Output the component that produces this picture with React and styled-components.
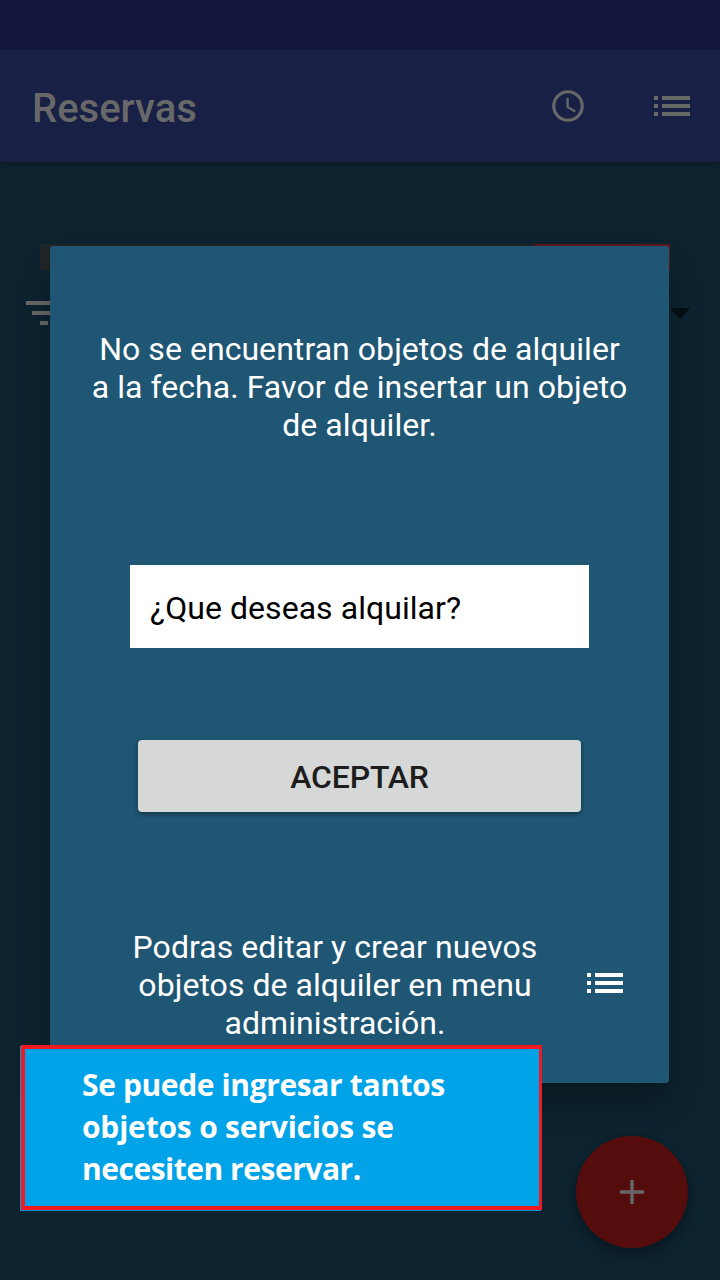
import React from "react";
import styled, { createGlobalStyle } from "styled-components";

const GlobalStyle = createGlobalStyle`
  * { box-sizing: border-box; }
  body { margin: 0; background: #0d232f; font-family: Roboto, sans-serif; }
  h1, p { margin: 0; }
`;

const Screen = styled.div`
  position: relative;
  width: 720px;
  height: 1280px;
  overflow: hidden;
  background: #0d232f;
`;

const StatusBar = styled.div`
  height: 50px;
  background: #13173f;
`;

const AppBar = styled.header`
  display: flex;
  align-items: center;
  height: 112px;
  padding: 0 30px 0 32px;
  background: #192046;
  box-shadow: 0 2px 7px rgba(0, 0, 0, 0.3);
`;

const Title = styled.h1`
  flex: 1;
  padding-top: 6px;
  font-size: 40px;
  line-height: 48px;
  font-weight: 500;
  color: #686868;
`;

const Actions = styled.div`
  display: flex;
  align-items: center;
  gap: 67px;
`;

const Icon = styled.svg`
  display: block;
  flex: none;
  fill: ${(p) => p.$color || "#686868"};
`;

const TableHead = styled.div`
  display: flex;
  height: 26px;
  margin: 82px 50px 0 40px;
`;

const HeadCell = styled.div`
  flex: ${(p) => (p.$width ? `0 0 ${p.$width}px` : 1)};
  background: ${(p) => p.$bg};
`;

const FilterRow = styled.div`
  display: flex;
  justify-content: space-between;
  padding: 31px 30px 0 26px;
`;

const Caret = styled.svg`
  display: block;
  margin-top: 7px;
  fill: #060f14;
`;

const Fab = styled.button`
  position: absolute;
  right: 32px;
  bottom: 32px;
  display: flex;
  align-items: center;
  justify-content: center;
  width: 112px;
  height: 112px;
  padding: 0;
  border: 0;
  border-radius: 50%;
  background: #550c0d;
  box-shadow: 0 8px 14px rgba(0, 0, 0, 0.26), 0 0 5px rgba(0, 0, 0, 0.15);
`;

const Dialog = styled.section`
  position: absolute;
  left: 50px;
  top: 246px;
  display: flex;
  flex-direction: column;
  align-items: center;
  width: 619px;
  height: 837px;
  padding-top: 84px;
  border-radius: 3px;
  background: #1e5673;
  box-shadow: 0 20px 32px -4px rgba(0, 0, 0, 0.34);
`;

const Message = styled.p`
  width: ${(p) => p.$width}px;
  font-size: 32px;
  line-height: 38px;
  letter-spacing: 0.05px;
  text-align: center;
  color: #fff;
`;

const Field = styled.div`
  display: flex;
  align-items: center;
  width: 459px;
  height: 83px;
  margin-top: 121px;
  padding: 3px 20px 0;
  background: #fff;
  font-size: 32px;
  line-height: 38px;
  letter-spacing: 0.05px;
  color: #000;
`;

const AcceptButton = styled.button`
  width: 443px;
  height: 72px;
  margin-top: 92px;
  padding: 2px 0 0;
  border: 0;
  border-radius: 4px;
  background: #d6d7d7;
  box-shadow: 0 2px 4px rgba(0, 0, 0, 0.4);
  font: 500 32px/38px Roboto, sans-serif;
  letter-spacing: -0.2px;
  color: #1d1d1d;
`;

const Hint = styled.div`
  display: flex;
  align-items: flex-start;
  align-self: stretch;
  margin-top: 116px;
  padding: 0 46px 0 70px;
  justify-content: space-between;
`;

const HintIcon = styled.div`
  padding-top: 45px;
`;

const Callout = styled.aside`
  position: absolute;
  left: 21px;
  top: 1045px;
  width: 521px;
  height: 165px;
  padding: 15px 0 0 57px;
  border: 4px solid #f11a20;
  border-right-width: 3px;
  background: #00a2e8;
  box-shadow: -1px 1px 0 #1292d6;
  font: 700 30px/42px "Open Sans", sans-serif;
  color: #fff;
`;

const Line = styled.span`
  display: block;
  white-space: nowrap;
  letter-spacing: ${(p) => (p.$tracking ? `${p.$tracking}px` : "inherit")};
`;

function ListIcon({ color }) {
  return (
    <Icon $color={color} width="36" height="20" viewBox="0 0 36 20">
      <path d="M0 0h4v4H0zM8 0h28v4H8zM0 8h4v4H0zM8 8h28v4H8zM0 16h4v4H0zM8 16h28v4H8z" />
    </Icon>
  );
}

export default function App() {
  return (
    <Screen>
      <GlobalStyle />
      <StatusBar />
      <AppBar>
        <Title>Reservas</Title>
        <Actions>
          <Icon width="38" height="38" viewBox="0 0 24 24">
            <path d="M11.99 2C6.47 2 2 6.48 2 12s4.47 10 9.99 10C17.52 22 22 17.52 22 12S17.52 2 11.99 2zM12 20c-4.42 0-8-3.58-8-8s3.58-8 8-8 8 3.58 8 8-3.58 8-8 8z" />
            <path d="M12.5 7H11v6l5.25 3.15.75-1.23-4.5-2.67z" />
          </Icon>
          <ListIcon />
        </Actions>
      </AppBar>
      <TableHead>
        <HeadCell $bg="#1f2527" />
        <HeadCell $width={136} $bg="#5e1818" />
      </TableHead>
      <FilterRow>
        <Icon width="36" height="24" viewBox="0 0 36 24">
          <path d="M0 0h36v4H0zM6 10h24v4H6zM14 20h8v4h-8z" />
        </Icon>
        <Caret width="20" height="11" viewBox="0 0 20 11">
          <path d="M0 0h20L10 11z" />
        </Caret>
      </FilterRow>
      <Fab aria-label="Agregar">
        <Icon width="24" height="24" viewBox="0 0 24 24">
          <path d="M10.3 0h3.4v10.3H24v3.4H13.7V24h-3.4V13.7H0v-3.4h10.3z" />
        </Icon>
      </Fab>
      <Dialog>
        <Message $width={560}>
          <Line>No se encuentran objetos de alquiler</Line>
          <Line>a la fecha. Favor de insertar un objeto</Line>
          <Line>de alquiler.</Line>
        </Message>
        <Field>¿Que deseas alquilar?</Field>
        <AcceptButton>ACEPTAR</AcceptButton>
        <Hint>
          <Message $width={430}>
            <Line>Podras editar y crear nuevos</Line>
            <Line>objetos de alquiler en menu</Line>
            <Line>administración.</Line>
          </Message>
          <HintIcon>
            <ListIcon color="#fff" />
          </HintIcon>
        </Hint>
      </Dialog>
      <Callout>
        <Line $tracking={-0.38}>Se puede ingresar tantos</Line>
        <Line $tracking={-0.2}>objetos o servicios se</Line>
        <Line $tracking={-0.48}>necesiten reservar.</Line>
      </Callout>
    </Screen>
  );
}
